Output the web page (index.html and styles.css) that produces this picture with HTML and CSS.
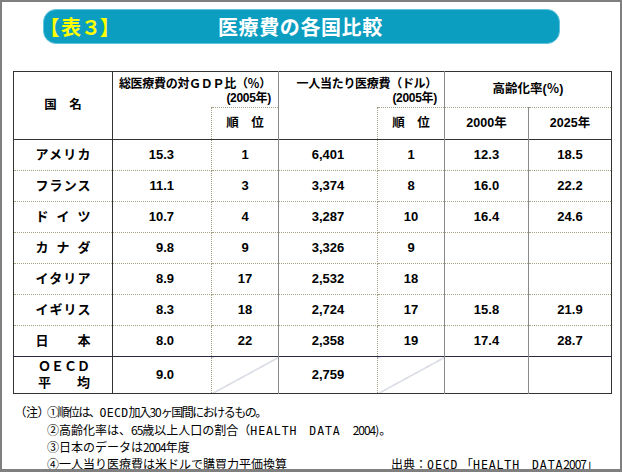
FILE: index.html
```html
<!DOCTYPE html>
<html lang="ja">
<head>
<meta charset="utf-8">
<title>表3 医療費の各国比較</title>
<link rel="stylesheet" href="styles.css">
</head>
<body>
<div class="frame">
  <div class="banner">
    <span class="tag">【表３】</span>
    <span class="title">医療費の各国比較</span>
  </div>
  <table class="data">
    <colgroup>
      <col class="w1"><col class="w2"><col class="w3"><col class="w4"><col class="w5"><col class="w6"><col class="w7">
    </colgroup>
    <thead>
      <tr class="h1">
        <th rowspan="2" class="cn">国　名</th>
        <th colspan="2" class="grp">総医療費の対ＧＤＰ比（％）<br>(2005年)</th>
        <th colspan="2" class="grp gl">一人当たり医療費（ドル）<br>(2005年)</th>
        <th colspan="2" class="gl">高齢化率(％)</th>
      </tr>
      <tr class="h2">
        <th class="nt"></th>
        <th>順　位</th>
        <th class="nt gl"></th>
        <th>順　位</th>
        <th class="gl">2000年</th>
        <th class="gl">2025年</th>
      </tr>
    </thead>
    <tbody>
      <tr class="first">
        <td class="cn"><span class="jn">アメリカ</span></td><td class="num">15.3</td><td>1</td><td class="gl">6,401</td><td>1</td><td class="gl">12.3</td><td class="gl">18.5</td>
      </tr>
      <tr>
        <td class="cn"><span class="jn">フランス</span></td><td class="num">11.1</td><td>3</td><td class="gl">3,374</td><td>8</td><td class="gl">16.0</td><td class="gl">22.2</td>
      </tr>
      <tr>
        <td class="cn"><span class="jn">ドイツ</span></td><td class="num">10.7</td><td>4</td><td class="gl">3,287</td><td>10</td><td class="gl">16.4</td><td class="gl">24.6</td>
      </tr>
      <tr>
        <td class="cn"><span class="jn">カナダ</span></td><td class="num">9.8</td><td>9</td><td class="gl">3,326</td><td>9</td><td class="gl"></td><td class="gl"></td>
      </tr>
      <tr>
        <td class="cn"><span class="jn">イタリア</span></td><td class="num">8.9</td><td>17</td><td class="gl">2,532</td><td>18</td><td class="gl"></td><td class="gl"></td>
      </tr>
      <tr>
        <td class="cn"><span class="jn">イギリス</span></td><td class="num">8.3</td><td>18</td><td class="gl">2,724</td><td>17</td><td class="gl">15.8</td><td class="gl">21.9</td>
      </tr>
      <tr>
        <td class="cn"><span class="jn">日本</span></td><td class="num">8.0</td><td>22</td><td class="gl">2,358</td><td>19</td><td class="gl">17.4</td><td class="gl">28.7</td>
      </tr>
      <tr class="oecd">
        <td class="cn"><span class="jn">ＯＥＣＤ</span><span class="jn">平均</span></td><td class="num">9.0</td><td class="diag"></td><td class="gl">2,759</td><td class="diag"></td><td class="gl"></td><td class="gl"></td>
      </tr>
    </tbody>
  </table>
  <div class="notes">
    <div class="lbl">（注）</div>
    <div class="items">
      <div class="n1">①順位は、<span class="lt">OECD</span>加入<span class="dg">30</span>ヶ国間におけるもの。</div>
      <div>②高齢化率は、<span class="dg">65</span>歳以上人口の割合（<span class="lt">HEALTH</span>　<span class="lt">DATA</span>　<span class="dg">2004</span>)。</div>
      <div>③日本のデータは<span class="dg">2004</span>年度</div>
      <div class="last"><span>④一人当り医療費は米ドルで購買力平価換算</span><span>出典：<span class="lt">OECD</span> 「<span class="lt">HEALTH</span>　<span class="lt">DATA</span><span class="dg">2007</span>」</span></div>
    </div>
  </div>
</div>
</body>
</html>
```

FILE: styles.css
```css
* { box-sizing: border-box; }
html, body { margin: 0; padding: 0; background: #fff; }
body {
  font-family: "Liberation Sans", "Noto Sans CJK JP", sans-serif;
  color: #000;
}
.frame {
  width: 622px;
  height: 472px;
  border: 2px solid #7f7f7f;
  border-bottom-width: 3px;
  overflow: hidden;
}
.banner {
  margin: 7px 0 0 41px;
  width: 517px;
  height: 35px;
  border-radius: 13px;
  background: #0b9ec0;
  border: 1px solid #62c4de;
  display: flex;
  align-items: center;
  font-family: "Noto Sans CJK JP", sans-serif;
  font-weight: 700;
  font-size: 20px;
  line-height: 1;
}
.tag {
  color: #ffff00;
  width: 174px;
  padding-left: 5px;
  font-feature-settings: "palt";
  letter-spacing: 2px;
}
.title {
  color: #fff;
  letter-spacing: 0.6px;
}

.data {
  margin: 27px 0 0 11px;
  border-collapse: collapse;
  table-layout: fixed;
  width: 598px;
  border: 1px solid #333;
}
.w1 { width: 99px; }
.w2 { width: 99px; }
.w3 { width: 67px; }
.w4 { width: 99px; }
.w5 { width: 67px; }
.w6 { width: 84px; }
.w7 { width: 83px; }

.data th, .data td {
  border: 1px dotted #a6a182;
  padding: 0;
  font-weight: 700;
  font-size: 13px;
  line-height: 1.2;
  text-align: center;
  vertical-align: middle;
  white-space: nowrap;
}
.data th { font-size: 12.5px; }
.data .cn { border-right: 1px solid #333; }
.data .gl { border-left: 1px solid #8a8a8a; }
.data .grp {
  border-bottom: none;
  text-align: right;
  padding: 3px 7px 0 0;
  font-size: 12px;
  letter-spacing: -0.3px;
  line-height: 14.5px;
}
.data .nt { border-top: none; }
.h1 { height: 36px; }
.h2 { height: 32px; }
.data tbody tr { height: 31px; }
.data tr.first td { border-top: 1px solid #333; }
.data tr.oecd { height: 37px; }
.data tr.oecd td { border-top: 1px solid #2a2a44; }
.data .num { text-align: right; padding-right: 37px; }
.jn {
  display: block;
  width: 55px;
  margin: 0 auto;
  text-align: justify;
  text-align-last: justify;
  line-height: 16px;
}
.oecd .jn { width: 52px; margin-left: 24px; }
.diag {
  background: linear-gradient(to bottom right, transparent calc(50% - 0.6px), #9aa0b8 50%, transparent calc(50% + 0.6px));
}

.notes {
  display: flex;
  margin: 10px 22px 0 18px;
  font-family: "Noto Sans CJK JP", sans-serif;
  font-size: 12px;
  line-height: 16.5px;
  white-space: nowrap;
}
.lbl { width: 27px; font-feature-settings: "palt"; }
.items { flex: 1; }
.n1 { letter-spacing: -1.5px; }
.lt {
  font-family: "DejaVu Sans Mono", monospace;
  font-size: 11.5px;
  letter-spacing: 0.9px;
}
.dg { letter-spacing: -1px; }
.n1 .lt { letter-spacing: 0.3px; }
.n1 .dg { letter-spacing: -1px; }
.last { display: flex; justify-content: space-between; }
```
